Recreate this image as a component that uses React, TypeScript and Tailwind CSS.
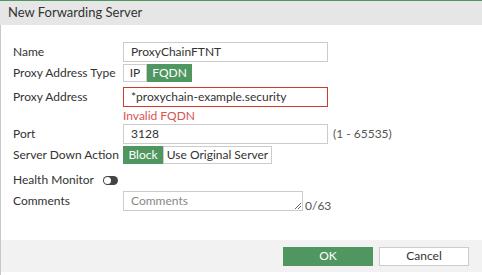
import React from 'react';

const green = 'bg-[#4f9660]';

function Label({ children }: { children: React.ReactNode }) {
  return <div className="w-[110px] shrink-0 text-[#333]">{children}</div>;
}

export default function App() {
  return (
    <div className="w-[482px] h-[275px] flex flex-col bg-white text-[12px] text-[#333] overflow-hidden" style={{ fontFamily: 'Lato, "Open Sans", sans-serif' }}>
      <div className="h-[1px] bg-[#4f9660]" />
      <div className="h-[24px] bg-[#e6e6e6] flex items-center pl-[8px] text-[13px] text-[#333]">New Forwarding Server</div>
      <div className="flex-1 flex flex-col border-l border-[#c8c8c8]">
        <div className="flex-1 pl-[12px] pt-[17px]">
          <div className="flex items-center h-[20px]">
            <Label>Name</Label>
            <div className="w-[205px] h-[20px] border border-[#ccc] flex items-center pl-[7px]">ProxyChainFTNT</div>
          </div>
          <div className="flex items-center h-[18px] mt-[2px]">
            <Label>Proxy Address Type</Label>
            <div className="flex h-[18px]">
              <div className="w-[24px] border border-[#ccc] flex items-center justify-center">IP</div>
              <div className={`w-[45px] ${green} text-white flex items-center justify-center`}>FQDN</div>
            </div>
          </div>
          <div className="flex items-center h-[20px] mt-[5px]">
            <Label>Proxy Address</Label>
            <div className="w-[205px] h-[20px] border border-[#d0392b] flex items-center pl-[7px]">*proxychain-example.security</div>
          </div>
          <div className="flex items-center h-[17px] pl-[110px] text-[#d9534f]">Invalid FQDN</div>
          <div className="flex items-center h-[20px]">
            <Label>Port</Label>
            <div className="w-[205px] h-[20px] border border-[#ccc] flex items-center pl-[7px]">3128</div>
            <span className="ml-[5px] text-[#555]">(1 - 65535)</span>
          </div>
          <div className="flex items-center h-[18px] mt-[2px]">
            <Label>Server Down Action</Label>
            <div className="flex h-[18px]">
              <div className={`w-[40px] ${green} text-white flex items-center justify-center`}>Block</div>
              <div className="w-[109px] border border-[#ccc] flex items-center justify-center">Use Original Server</div>
            </div>
          </div>
          <div className="flex items-center h-[20px] mt-[6px]">
            <div className="w-[90px] shrink-0">Health Monitor</div>
            <div className="w-[15px] h-[9px] rounded-full bg-[#444] flex items-center pl-[1px]">
              <div className="w-[7px] h-[7px] rounded-full bg-white" />
            </div>
          </div>
          <div className="flex items-end h-[20px] mt-[1px]">
            <div className="w-[110px] shrink-0 self-center">Comments</div>
            <div className="relative w-[180px] h-[20px] border border-[#ccc] flex items-center pl-[7px] text-[#888]">
              Comments
              <svg className="absolute right-[1px] bottom-[1px]" width="7" height="7" viewBox="0 0 7 7">
                <path d="M1 7 L7 1 M4 7 L7 4" stroke="#666" strokeWidth="1" />
              </svg>
            </div>
            <span className="ml-[2px] leading-none mb-[-1px] text-[#555]">0/63</span>
          </div>
        </div>
        <div className="h-[32px] bg-[#f2f2f2] flex items-center justify-end pr-[13px] gap-[6px]">
          <div className={`w-[90px] h-[19px] ${green} text-white flex items-center justify-center`}>OK</div>
          <div className="w-[90px] h-[19px] bg-white border border-[#ccc] flex items-center justify-center">Cancel</div>
        </div>
        <div className="h-[3px]" />
      </div>
    </div>
  );
}
